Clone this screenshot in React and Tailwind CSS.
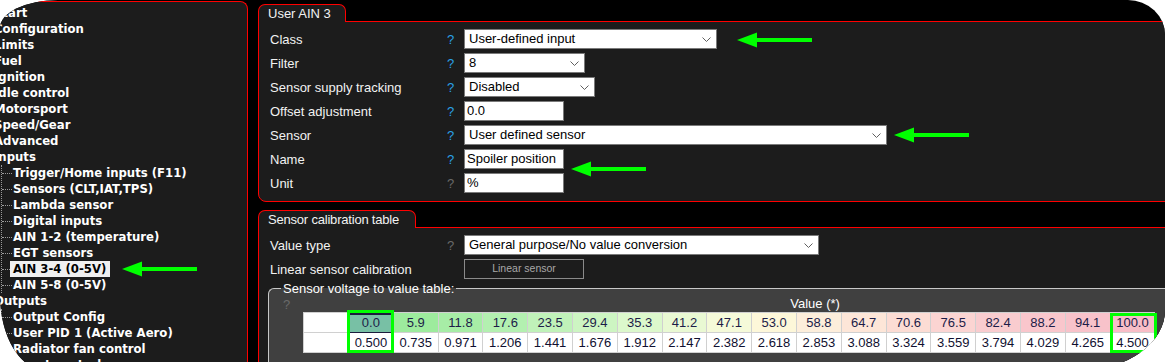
import React from "react";

const topItems = ["Start", "Configuration", "Limits", "Fuel", "Ignition", "Idle control", "Motorsport", "Speed/Gear", "Advanced"];
const inputItems = [
  "Trigger/Home inputs (F11)",
  "Sensors (CLT,IAT,TPS)",
  "Lambda sensor",
  "Digital inputs",
  "AIN 1-2 (temperature)",
  "EGT sensors",
  "AIN 3-4 (0-5V)",
  "AIN 5-8 (0-5V)",
];
const outputItems = ["Output Config", "User PID 1 (Active Aero)", "Radiator fan control", "Boost control"];

const ainRows = [
  { label: "Class", kind: "select", w: "w-[253px]", value: "User-defined input" },
  { label: "Filter", kind: "select", w: "w-[121px]", value: "8" },
  { label: "Sensor supply tracking", kind: "select", w: "w-[131px]", value: "Disabled" },
  { label: "Offset adjustment", kind: "input", w: "w-[100px]", value: "0.0" },
  { label: "Sensor", kind: "select", w: "w-[423px]", value: "User defined sensor" },
  { label: "Name", kind: "input", w: "w-[100px]", value: "Spoiler position" },
  { label: "Unit", kind: "input", w: "w-[100px]", value: "%", muted: true },
];

const cols = [
  { v: "0.0", d: "0.500", bg: "bg-[#78c0a5]", sel: true },
  { v: "5.9", d: "0.735", bg: "bg-[#9deb9d]" },
  { v: "11.8", d: "0.971", bg: "bg-[#a7eda6]" },
  { v: "17.6", d: "1.206", bg: "bg-[#b3f0b0]" },
  { v: "23.5", d: "1.441", bg: "bg-[#c0f2b9]" },
  { v: "29.4", d: "1.676", bg: "bg-[#cdf5c2]" },
  { v: "35.3", d: "1.912", bg: "bg-[#dcf8cc]" },
  { v: "41.2", d: "2.147", bg: "bg-[#e9f9d3]" },
  { v: "47.1", d: "2.382", bg: "bg-[#f5fad9]" },
  { v: "53.0", d: "2.618", bg: "bg-[#fdf7d9]" },
  { v: "58.8", d: "2.853", bg: "bg-[#fdeedb]" },
  { v: "64.7", d: "3.088", bg: "bg-[#fde6d8]" },
  { v: "70.6", d: "3.324", bg: "bg-[#fcdcd4]" },
  { v: "76.5", d: "3.559", bg: "bg-[#fbd4d2]" },
  { v: "82.4", d: "3.794", bg: "bg-[#f9cccf]" },
  { v: "88.2", d: "4.029", bg: "bg-[#f9c6cc]" },
  { v: "94.1", d: "4.265", bg: "bg-[#f8c2ca]" },
  { v: "100.0", d: "4.500", bg: "bg-[#f8bdc7]" },
];

const Chevron = () => (
  <svg width="9" height="5" viewBox="0 0 9 5" className="shrink-0">
    <polyline points="0.5,0.5 4.5,4.5 8.5,0.5" fill="none" stroke="#606060" strokeWidth="1" />
  </svg>
);

const Arrow = ({ className }) => (
  <svg width="76" height="16" viewBox="0 0 76 16" className={`absolute z-20 ${className}`}>
    <polygon points="0,8 20,0.5 20,15.5" fill="#00ff00" />
    <rect x="18" y="6" width="57" height="4" fill="#00ff00" />
  </svg>
);

const Field = ({ kind, w, value }) =>
  kind === "select" ? (
    <div className={`flex h-[20px] items-center justify-between border border-[#7a7a7a] bg-white pl-[4px] pr-[5px] text-black ${w}`}>
      <span>{value}</span>
      <Chevron />
    </div>
  ) : (
    <div className={`flex h-[20px] items-center border border-[#7a7a7a] bg-white pl-[2px] text-black ${w}`}>{value}</div>
  );

const TreeChild = ({ name, selected }) => (
  <div className="flex h-[16px] items-center">
    {selected ? (
      <>
        <span className="w-[8px] border-t border-dotted border-[#9a9a9a]" />
        <span className="h-[16px] bg-[#f0f0f0] pl-[3px] pr-[4px] text-black">{name}</span>
      </>
    ) : (
      <>
        <span className="w-[10px] border-t border-dotted border-[#9a9a9a]" />
        <span className="ml-[1px]">{name}</span>
      </>
    )}
  </div>
);

export default function App() {
  return (
    <div className="h-[362px] w-[1165px] overflow-hidden bg-white">
      <div className="relative flex h-[370px] w-[1165px] overflow-hidden rounded-tl-[58px_28px] rounded-tr-[37px_35px] rounded-br-[84px_60px] rounded-bl-[45px_75px] bg-black pt-[1px] font-['Liberation_Sans',Arial,sans-serif] text-[13px] text-[#f2f2f2]">
        {/* navigation tree */}
        <div className="w-[248px] shrink-0 rounded-tr-[8px] border-r border-t border-[#ff0000] bg-[#1c1c1c] pt-[3px] font-['DejaVu_Sans',Verdana,sans-serif] text-[11.7px] font-bold leading-[16px] text-white">
          {topItems.map((t) => (
            <div key={t} className="ml-[-6px] h-[16px] whitespace-nowrap">{t}</div>
          ))}
          <div className="ml-[-6px] h-[16px]">Inputs</div>
          <div className="ml-[1px] border-l border-dotted border-[#9a9a9a]">
            {inputItems.map((t) => (
              <TreeChild key={t} name={t} selected={t === "AIN 3-4 (0-5V)"} />
            ))}
          </div>
          <div className="ml-[-6px] h-[16px]">Outputs</div>
          <div className="ml-[1px] border-l border-dotted border-[#9a9a9a]">
            {outputItems.map((t) => (
              <TreeChild key={t} name={t} />
            ))}
          </div>
        </div>

        {/* settings */}
        <div className="ml-[10px] w-[930px] shrink-0 pt-[3px]">
          <div className="relative z-10 mb-[-1px] h-[18px] w-[88px] rounded-t-[7px] border-x border-t border-[#ff0000] bg-[#1c1c1c] pl-[9px] leading-[17px]">
            User AIN 3
          </div>
          <div className="flex h-[181px] flex-col gap-[4px] rounded-b-[8px] border border-[#ff0000] bg-[#1c1c1c] pl-[11px] pt-[7px]">
            {ainRows.map((r) => (
              <div key={r.label} className="flex h-[20px] items-center">
                <span className="mt-[2px] w-[177px]">{r.label}</span>
                <span className={`mt-[2px] w-[17px] ${r.muted ? "text-[#6a6a6a]" : "text-[#2aa0e8]"}`}>?</span>
                <Field kind={r.kind} w={r.w} value={r.value} />
              </div>
            ))}
          </div>

          <div className="relative z-10 mb-[-1px] mt-[8px] h-[18px] w-[158px] rounded-t-[7px] border-x border-t border-[#ff0000] bg-[#1c1c1c] pl-[9px] leading-[17px] tracking-[-0.2px]">
            Sensor calibration table
          </div>
          <div className="h-[200px] border border-[#ff0000] bg-[#1c1c1c] pt-[7px]">
            <div className="flex flex-col gap-[4px] pl-[11px]">
              <div className="flex h-[20px] items-center">
                <span className="mt-[2px] w-[177px]">Value type</span>
                <span className="mt-[2px] w-[17px] text-[#6a6a6a]">?</span>
                <Field kind="select" w="w-[355px]" value="General purpose/No value conversion" />
              </div>
              <div className="flex h-[20px] items-center">
                <span className="mt-[2px] w-[194px]">Linear sensor calibration</span>
                <div className="flex h-[20px] w-[120px] items-center justify-center border border-[#8a8a8a] bg-[#1c1c1c] text-[10.5px] text-[#a8a8a8]">
                  Linear sensor
                </div>
              </div>
            </div>

            <fieldset className="ml-[9px] mt-[2px] h-[120px] rounded-tl-[6px] border-l border-t border-[#c8c8c8] bg-[#404040]">
              <legend className="ml-[12px] px-[2px] leading-[15px] text-white">Sensor voltage to value table:</legend>
              <div className="flex h-[16px] items-center">
                <span className="ml-[14px] mt-[2px] text-[#6a6a6a]">?</span>
                <span className="ml-[500px] text-white">Value (*)</span>
              </div>
              <div className="relative ml-[34px] w-fit">
                <div className="grid grid-cols-[45px_repeat(18,44.8px)] border-l border-t border-[#d0d0d0] bg-white leading-[19px]">
                  <div className="h-[20px] border-b border-r border-[#d0d0d0] bg-white" />
                  {cols.map((c) => (
                    <div
                      key={c.v}
                      className={`h-[20px] border-b border-r border-[#d0d0d0] text-center text-[#1c1c48] ${c.bg} ${c.sel ? "border-y-2 border-y-[#1c1c3c] leading-[16px]" : ""}`}
                    >
                      {c.v}
                    </div>
                  ))}
                  <div className="h-[20px] border-b border-r border-[#d0d0d0] bg-white" />
                  {cols.map((c) => (
                    <div key={c.d} className="h-[20px] border-b border-r border-[#d0d0d0] bg-white text-center text-[#101030]">
                      {c.d}
                    </div>
                  ))}
                </div>
                <div className="absolute left-[44px] top-[-2px] h-[43px] w-[47px] border-[3px] border-[#00ff00]" />
                <div className="absolute left-[807px] top-[1px] h-[40px] w-[47px] border-[3px] border-[#00ff00]" />
              </div>
            </fieldset>
          </div>
        </div>

        <Arrow className="left-[737px] top-[32px]" />
        <Arrow className="left-[894px] top-[127px]" />
        <Arrow className="left-[571px] top-[161px]" />
        <Arrow className="left-[122px] top-[261px]" />
      </div>
    </div>
  );
}
